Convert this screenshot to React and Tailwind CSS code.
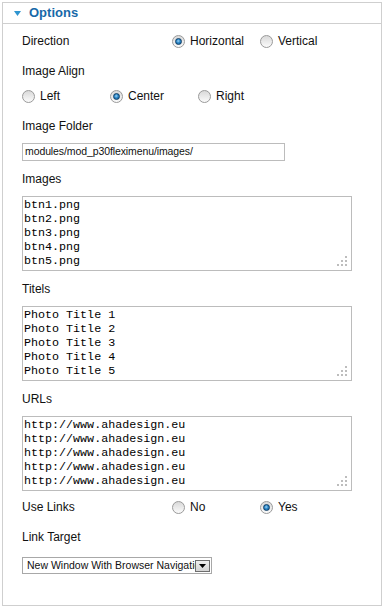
import React from 'react'

const images = ['btn1.png', 'btn2.png', 'btn3.png', 'btn4.png', 'btn5.png']
const titles = ['Photo Title 1', 'Photo Title 2', 'Photo Title 3', 'Photo Title 4', 'Photo Title 5']
const urls = Array(5).fill('http://www.ahadesign.eu')

function Radio({ checked, label }) {
  return (
    <label className="flex w-[88px] items-center gap-[5px]">
      <span className="flex h-[13px] w-[13px] items-center justify-center rounded-full border border-[#9a9a9a] bg-gradient-to-b from-[#d9d9d9] to-[#fbfbfb]">
        {checked && (
          <span className="h-[7px] w-[7px] rounded-full border border-[#0d3d66] bg-[radial-gradient(circle_at_45%_40%,#9fd4f5_0%,#2a86c7_45%,#105a94_100%)]"></span>
        )}
      </span>
      <span>{label}</span>
    </label>
  )
}

function Grip() {
  return (
    <svg className="absolute bottom-[4px] right-[4px]" width="10" height="10" viewBox="0 0 10 10">
      <g fill="#bdbdbd">
        <rect x="8" y="0" width="2" height="2" />
        <rect x="4" y="4" width="2" height="2" />
        <rect x="8" y="4" width="2" height="2" />
        <rect x="0" y="8" width="2" height="2" />
        <rect x="4" y="8" width="2" height="2" />
        <rect x="8" y="8" width="2" height="2" />
      </g>
    </svg>
  )
}

function TextBox({ lines }) {
  return (
    <div className="relative h-[75px] w-[330px] border border-[#bcbcbc] bg-white px-[1px] pt-[1px] font-['Liberation_Mono',monospace] text-[11.7px] leading-[14px] text-black">
      {lines.map((l, i) => (
        <div key={i}>{l}</div>
      ))}
      <Grip />
    </div>
  )
}

function Label({ children, h = 'h-[35px]' }) {
  return <div className={`${h} flex items-center`}>{children}</div>
}

export default function App() {
  return (
    <div className="h-[608px] w-[384px] bg-white p-[2px] font-['Liberation_Sans',Arial,sans-serif] text-[12px] text-[#111]">
      <div className="h-full border border-[#cfcfcf]">
        <div className="flex h-[21px] items-center gap-[8px] border-b border-[#cfcfcf] pl-[11px]">
          <svg width="7" height="5" viewBox="0 0 7 5">
            <path d="M0 0H7L3.5 5Z" fill="#2f95d0" />
          </svg>
          <span className="text-[13px] font-bold text-[#1769a8]">Options</span>
        </div>
        <div className="pl-[19px]">
          <div className="flex h-[34px] items-center">
            <span className="w-[150px]">Direction</span>
            <Radio checked label="Horizontal" />
            <Radio label="Vertical" />
          </div>
          <div className="flex h-[26px] items-center">Image Align</div>
          <div className="flex h-[24px] items-center">
            <Radio label="Left" />
            <Radio checked label="Center" />
            <Radio label="Right" />
          </div>
          <Label>Image Folder</Label>
          <div className="flex h-[18px] w-[263px] items-center border border-[#bcbcbc] px-[2px] text-[10.5px] tracking-[-0.1px]">
            modules/mod_p30fleximenu/images/
          </div>
          <Label>Images</Label>
          <TextBox lines={images} />
          <Label>Titels</Label>
          <TextBox lines={titles} />
          <Label>URLs</Label>
          <TextBox lines={urls} />
          <div className="flex h-[32px] items-center">
            <span className="w-[150px]">Use Links</span>
            <Radio label="No" />
            <Radio checked label="Yes" />
          </div>
          <div className="mb-[6px] flex h-[28px] items-center">Link Target</div>
          <div className="flex h-[17px] w-[190px] items-center border border-[#a8a8a8] bg-white pl-[4px] pr-[1px] text-[10.5px]">
            <span className="flex-1 overflow-hidden whitespace-nowrap">New Window With Browser Navigation</span>
            <span className="flex h-[12px] w-[15px] items-center justify-center border border-[#6e6e6e] bg-gradient-to-b from-[#f0f0f0] to-[#d4d4d4]">
              <svg width="7" height="4" viewBox="0 0 7 4">
                <path d="M0 0H7L3.5 4Z" fill="#000" />
              </svg>
            </span>
          </div>
        </div>
      </div>
    </div>
  )
}
